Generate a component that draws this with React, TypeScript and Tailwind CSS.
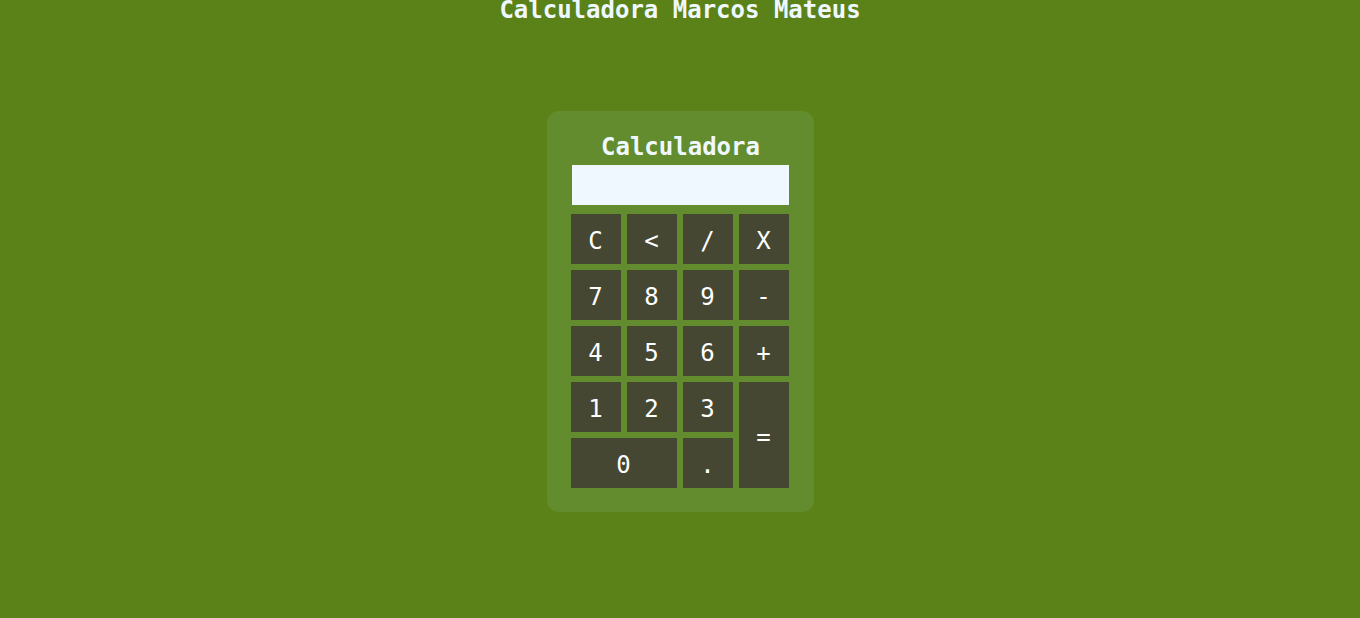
import React, { useState } from "react";

const keys: { label: string; span?: string }[] = [
  { label: "C" },
  { label: "<" },
  { label: "/" },
  { label: "X" },
  { label: "7" },
  { label: "8" },
  { label: "9" },
  { label: "-" },
  { label: "4" },
  { label: "5" },
  { label: "6" },
  { label: "+" },
  { label: "1" },
  { label: "2" },
  { label: "3" },
  { label: "=", span: "row-span-2" },
  { label: "0", span: "col-span-2" },
  { label: "." },
];

const App = () => {
  const [display, setDisplay] = useState("");

  function press(k: string) {
    if (k === "C") return setDisplay("");
    if (k === "<") return setDisplay((prev) => prev.slice(0, -1));
    if (k === "=") {
      try {
        // eslint-disable-next-line no-new-func
        const r = Function(`return (${display.replace(/X/g, "*")})`)();
        setDisplay(String(r));
      } catch {
        setDisplay("");
      }
      return;
    }
    setDisplay((prev) => prev + k);
  }

  return (
    <div className="min-h-[618px] w-full bg-[#5a8219] font-['DejaVu_Sans_Mono',monospace] text-[#f0f8ff]">
      <h1 className="text-center text-[24px] font-bold leading-[21px]">
        Calculadora Marcos Mateus
      </h1>
      <div className="mx-auto mt-[90px] w-[267px] rounded-[12px] bg-[#638c2f] pb-[24px] pl-[24px] pr-[25px] pt-[22px]">
        <h2 className="mb-[4px] pl-[2px] text-center text-[24px] font-bold leading-[28px]">
          Calculadora
        </h2>
        <input
          readOnly
          value={display}
          className="ml-px block h-[40px] w-[217px] bg-[#f0f8ff] px-2 text-right text-[22px] text-[#222] outline-none"
        />
        <div className="mt-[9px] grid grid-cols-[repeat(4,50px)] auto-rows-[50px] gap-[6px]">
          {keys.map((k) => (
            <button
              key={k.label}
              onClick={() => press(k.label)}
              className={`${k.span ?? ""} flex items-center justify-center bg-[#454733] pt-[3px] text-[24px] text-white`}
            >
              {k.label}
            </button>
          ))}
        </div>
      </div>
    </div>
  );
};

export default App;
